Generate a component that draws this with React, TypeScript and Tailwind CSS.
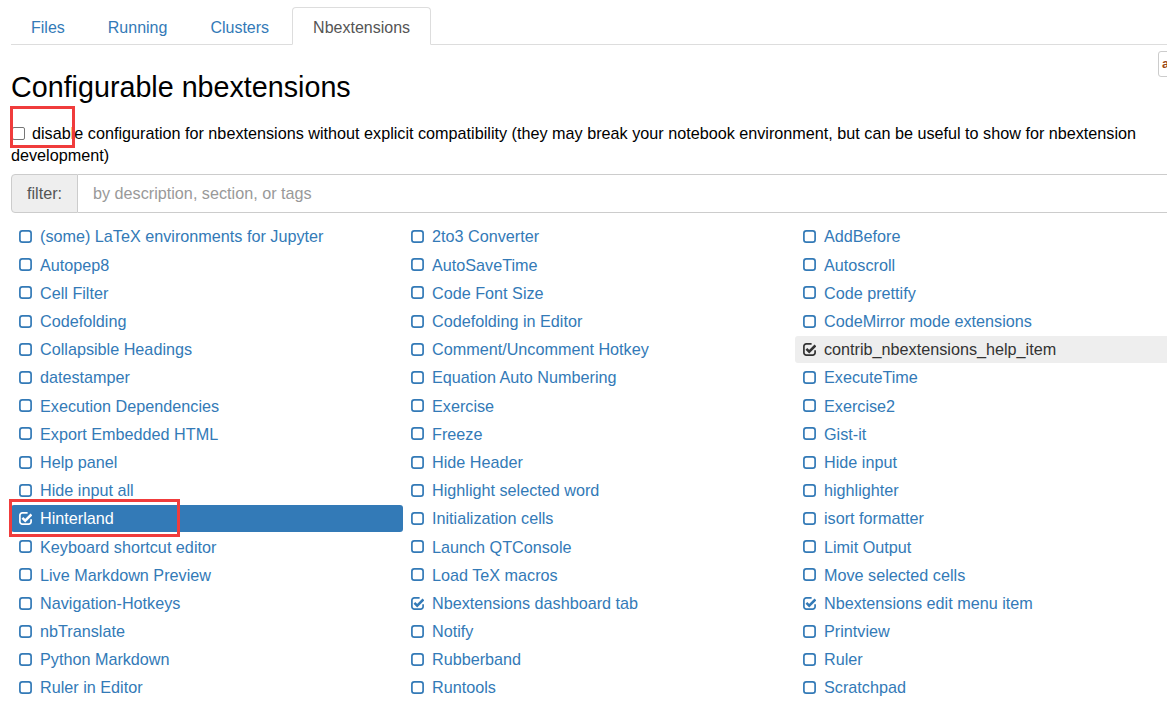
import React from 'react';

const columns: string[][] = [
  [
    '(some) LaTeX environments for Jupyter',
    'Autopep8',
    'Cell Filter',
    'Codefolding',
    'Collapsible Headings',
    'datestamper',
    'Execution Dependencies',
    'Export Embedded HTML',
    'Help panel',
    'Hide input all',
    'Hinterland',
    'Keyboard shortcut editor',
    'Live Markdown Preview',
    'Navigation-Hotkeys',
    'nbTranslate',
    'Python Markdown',
    'Ruler in Editor',
  ],
  [
    '2to3 Converter',
    'AutoSaveTime',
    'Code Font Size',
    'Codefolding in Editor',
    'Comment/Uncomment Hotkey',
    'Equation Auto Numbering',
    'Exercise',
    'Freeze',
    'Hide Header',
    'Highlight selected word',
    'Initialization cells',
    'Launch QTConsole',
    'Load TeX macros',
    'Nbextensions dashboard tab',
    'Notify',
    'Rubberband',
    'Runtools',
  ],
  [
    'AddBefore',
    'Autoscroll',
    'Code prettify',
    'CodeMirror mode extensions',
    'contrib_nbextensions_help_item',
    'ExecuteTime',
    'Exercise2',
    'Gist-it',
    'Hide input',
    'highlighter',
    'isort formatter',
    'Limit Output',
    'Move selected cells',
    'Nbextensions edit menu item',
    'Printview',
    'Ruler',
    'Scratchpad',
  ],
];

const checked = new Set([
  'Hinterland',
  'Nbextensions dashboard tab',
  'contrib_nbextensions_help_item',
  'Nbextensions edit menu item',
]);

function SquareIcon() {
  return (
    <svg width="13" height="13" viewBox="0 0 13 13" className="shrink-0">
      <rect x="0.9" y="0.9" width="11.2" height="11.2" rx="2.4" fill="none" stroke="currentColor" strokeWidth="1.7" />
    </svg>
  );
}

function CheckIcon() {
  return (
    <svg width="13" height="13" viewBox="0 0 13 13" className="shrink-0">
      <path
        d="M12.1 7.2 V9.7 a2.4 2.4 0 0 1 -2.4 2.4 H3.3 a2.4 2.4 0 0 1 -2.4 -2.4 V3.3 a2.4 2.4 0 0 1 2.4 -2.4 H8.6"
        fill="none"
        stroke="currentColor"
        strokeWidth="1.7"
      />
      <path d="M3.4 5.9 L6.2 8.7 L12.4 2.5" fill="none" stroke="currentColor" strokeWidth="2.5" />
    </svg>
  );
}

function Row({ name }: { name: string }) {
  const on = checked.has(name);
  let rowClass = 'text-[#337ab7]';
  if (name === 'Hinterland') rowClass = 'bg-[#337ab7] text-white';
  if (name === 'contrib_nbextensions_help_item') rowClass = 'bg-[#eeeeee] text-[#333333]';

  return (
    <div className="h-[28.2px] py-[0.6px]">
      <div className={`flex h-full items-center gap-2 rounded-[3px] pl-2 ${rowClass}`}>
        {on ? <CheckIcon /> : <SquareIcon />}
        <span className="whitespace-nowrap">{name}</span>
      </div>
    </div>
  );
}

export default function App() {
  return (
    <div className="relative h-[706px] w-[1167px] overflow-hidden bg-white text-[16.2px] text-black [font-family:'Liberation_Sans',Arial,sans-serif]">
      <div className="ml-[11px] w-[1176px]">
        <ul className="mt-[7px] flex border-b border-[#dddddd] text-[16px]">
          <li className="mr-[3px] px-5 pt-[12px] pb-[8px] leading-[17px] text-[#337ab7]">Files</li>
          <li className="mr-[3px] px-5 pt-[12px] pb-[8px] leading-[17px] text-[#337ab7]">Running</li>
          <li className="mr-[3px] px-5 pt-[12px] pb-[8px] leading-[17px] text-[#337ab7]">Clusters</li>
          <li className="-mb-px rounded-t-[4px] border border-[#dddddd] border-b-white bg-white px-5 pt-[11px] pb-[8px] leading-[17px] text-[#555555]">
            Nbextensions
          </li>
        </ul>

        <div className="flex items-start justify-between">
          <h1 className="mt-[27px] text-[28.7px] leading-[31.5px] font-normal">Configurable nbextensions</h1>
          <div className="mt-[6px] h-[26px] w-[29px] rounded-[3px] border border-[#cccccc] pl-[3px] text-[13px] leading-[24px] font-bold text-[#9a4a1c]">
            a
          </div>
        </div>

        <p className="mt-[18px] leading-[22px]">
          <span className="mr-[7px] ml-px inline-block h-[13px] w-[13px] translate-y-[1px] rounded-[2px] border border-[#767676] bg-white" />
          disable configuration for nbextensions without explicit compatibility (they may break your notebook environment, but can be useful to show for nbextension development)
        </p>

        <div className="mt-[8px] flex h-[39px]">
          <div className="flex w-[67px] items-center justify-center rounded-l-[4px] border border-[#cccccc] bg-[#eeeeee] text-[#555555]">
            filter:
          </div>
          <div className="flex flex-1 items-center border-y border-r border-[#cccccc] pl-[15px] text-[#999999]">
            by description, section, or tags
          </div>
        </div>

        <div className="mt-[10px] grid grid-cols-3">
          {columns.map((col, i) => (
            <div key={i} className="flex flex-col">
              {col.map((name) => (
                <Row key={name} name={name} />
              ))}
            </div>
          ))}
        </div>
      </div>

      <div className="pointer-events-none absolute top-[106px] left-[10px] h-[42px] w-[65px] border-[3px] border-[#f03c3c]" />
      <div className="pointer-events-none absolute top-[499px] left-[9px] h-[38px] w-[171px] border-[3px] border-[#f03c3c]" />
    </div>
  );
}
